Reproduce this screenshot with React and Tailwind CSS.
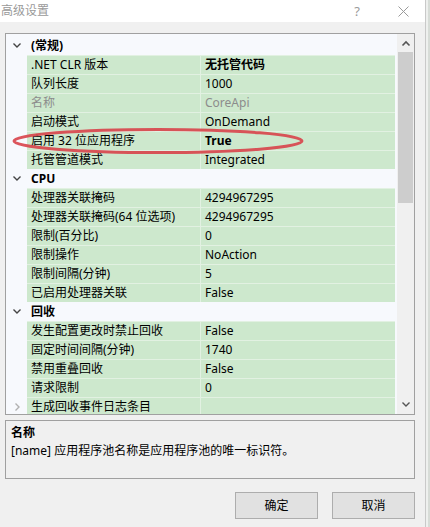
import React from "react";

const groups = [
  {
    title: "(常规)",
    rows: [
      { n: ".NET CLR 版本", v: "无托管代码", bold: true },
      { n: "队列长度", v: "1000" },
      { n: "名称", v: "CoreApi", grey: true },
      { n: "启动模式", v: "OnDemand" },
      { n: "启用 32 位应用程序", v: "True", bold: true },
      { n: "托管管道模式", v: "Integrated" },
    ],
  },
  {
    title: "CPU",
    rows: [
      { n: "处理器关联掩码", v: "4294967295" },
      { n: "处理器关联掩码(64 位选项)", v: "4294967295" },
      { n: "限制(百分比)", v: "0" },
      { n: "限制操作", v: "NoAction" },
      { n: "限制间隔(分钟)", v: "5" },
      { n: "已启用处理器关联", v: "False" },
    ],
  },
  {
    title: "回收",
    rows: [
      { n: "发生配置更改时禁止回收", v: "False" },
      { n: "固定时间间隔(分钟)", v: "1740" },
      { n: "禁用重叠回收", v: "False" },
      { n: "请求限制", v: "0" },
      { n: "生成回收事件日志条目", v: "", collapsed: true },
    ],
  },
];

function ChevronDown({ color = "#444" }) {
  return (
    <svg width="10" height="7" viewBox="0 0 10 7">
      <path d="M1.5 1.5 L5 5 L8.5 1.5" fill="none" stroke={color} strokeWidth="1.4" />
    </svg>
  );
}
function ChevronUp({ color = "#555" }) {
  return (
    <svg width="10" height="7" viewBox="0 0 10 7">
      <path d="M1.5 5.5 L5 2 L8.5 5.5" fill="none" stroke={color} strokeWidth="1.6" />
    </svg>
  );
}
function ChevronRight() {
  return (
    <svg width="7" height="10" viewBox="0 0 7 10">
      <path d="M1.5 1.5 L5 5 L1.5 8.5" fill="none" stroke="#b0b0b0" strokeWidth="1.4" />
    </svg>
  );
}

function HeaderRow({ title }) {
  return (
    <div className="flex h-[19px] shrink-0 bg-[#f7f9fd]">
      <div className="flex w-[21px] shrink-0 items-center justify-center pl-[1px]">
        <ChevronDown />
      </div>
      <div className="pl-[4px] text-[12px] font-bold leading-[19px] text-black">{title}</div>
    </div>
  );
}

function PropRow({ r }) {
  return (
    <div className="flex h-[19px] shrink-0 bg-[#f7f9fd]">
      <div className="flex w-[21px] shrink-0 items-center justify-center pl-[2px] pt-[1px]">
        {r.collapsed ? <ChevronRight /> : null}
      </div>
      <div className="flex flex-1 border-t border-[#e2f1e2] bg-[#cde8cd]">
        <div
          className={
            "w-[174px] shrink-0 whitespace-nowrap border-r border-[#e2f1e2] pl-[4px] text-[12px] leading-[18px] " +
            (r.grey ? "text-[#8c8c8c]" : "text-black")
          }
        >
          {r.n}
        </div>
        <div
          className={
            "flex-1 whitespace-nowrap pl-[4px] text-[12px] leading-[18px] " +
            (r.grey ? "text-[#8c8c8c] " : "text-black ") +
            (r.bold ? "font-bold" : "")
          }
        >
          {r.v}
        </div>
      </div>
      <div className="w-[2px] shrink-0" />
    </div>
  );
}

export default function App() {
  return (
    <div className="relative flex h-[527px] w-[430px] overflow-hidden font-['Noto_Sans','Open_Sans','Noto_Sans_CJK_SC',sans-serif]">
      <div className="flex w-[425px] shrink-0 flex-col bg-[#f0f0f0]">
        {/* Title bar */}
        <div className="flex h-[22px] shrink-0 items-center bg-white">
          <div className="pl-[1px] text-[12px] leading-[16px] text-[#9a9a9a]">高级设置</div>
          <div className="flex-1" />
          <div className="w-[20px] text-center text-[13px] leading-[16px] text-[#9a9a9a]">?</div>
          <div className="w-[26px]" />
          <div className="flex w-[20px] items-center justify-center">
            <svg width="11" height="11" viewBox="0 0 11 11">
              <path d="M0.5 0.5 L10.5 10.5 M10.5 0.5 L0.5 10.5" stroke="#9a9a9a" strokeWidth="1" />
            </svg>
          </div>
          <div className="w-[12px]" />
        </div>

        {/* Property grid */}
        <div className="ml-[5px] mt-[11px] flex h-[382px] w-[410px] shrink-0 border border-[#a0a0a0] bg-[#f7f9fd]">
          <div className="flex flex-1 flex-col overflow-hidden pt-[2px]">
            {groups.map((g) => (
              <React.Fragment key={g.title}>
                <HeaderRow title={g.title} />
                {g.rows.map((r) => (
                  <PropRow key={r.n} r={r} />
                ))}
              </React.Fragment>
            ))}
          </div>
          <div className="flex w-[17px] shrink-0 flex-col bg-[#f0f0f0]">
            <div className="flex h-[18px] shrink-0 items-center justify-center">
              <ChevronUp />
            </div>
            <div className="mx-[1px] h-[151px] shrink-0 bg-[#cdcdcd]" />
            <div className="flex-1" />
            <div className="flex h-[18px] shrink-0 items-center justify-center pb-[2px]">
              <ChevronDown color="#555" />
            </div>
          </div>
        </div>

        {/* Description */}
        <div className="ml-[5px] mt-[5px] h-[59px] w-[410px] shrink-0 border border-[#a0a0a0] bg-[#f0f0f0] pl-[5px] pt-[3px]">
          <div className="text-[12px] font-bold leading-[18px] text-black">名称</div>
          <div className="text-[12px] leading-[18px] text-black">[name] 应用程序池名称是应用程序池的唯一标识符。</div>
        </div>

        {/* Buttons */}
        <div className="mt-[13px] flex shrink-0 justify-end gap-[14px] pr-[10px]">
          <button className="h-[27px] w-[83px] border border-[#adadad] bg-[#e1e1e1] text-[12px] text-black">确定</button>
          <button className="h-[27px] w-[83px] border border-[#adadad] bg-[#e1e1e1] text-[12px] text-black">取消</button>
        </div>
      </div>

      {/* background window edge */}
      <div className="flex flex-1 border-l border-[#c9c9c9]">
        <div className="w-[2px] bg-[#eef0ee]" />
        <div className="flex-1 bg-[#d7dcd7]" />
      </div>

      {/* red hand-drawn ellipse */}
      <svg
        className="pointer-events-none absolute left-0 top-0"
        width="430"
        height="527"
        viewBox="0 0 430 527"
      >
        <ellipse
          cx="158"
          cy="141"
          rx="144"
          ry="11.5"
          fill="none"
          stroke="#d8434a"
          strokeWidth="3"
          opacity="0.9"
        />
      </svg>
    </div>
  );
}
